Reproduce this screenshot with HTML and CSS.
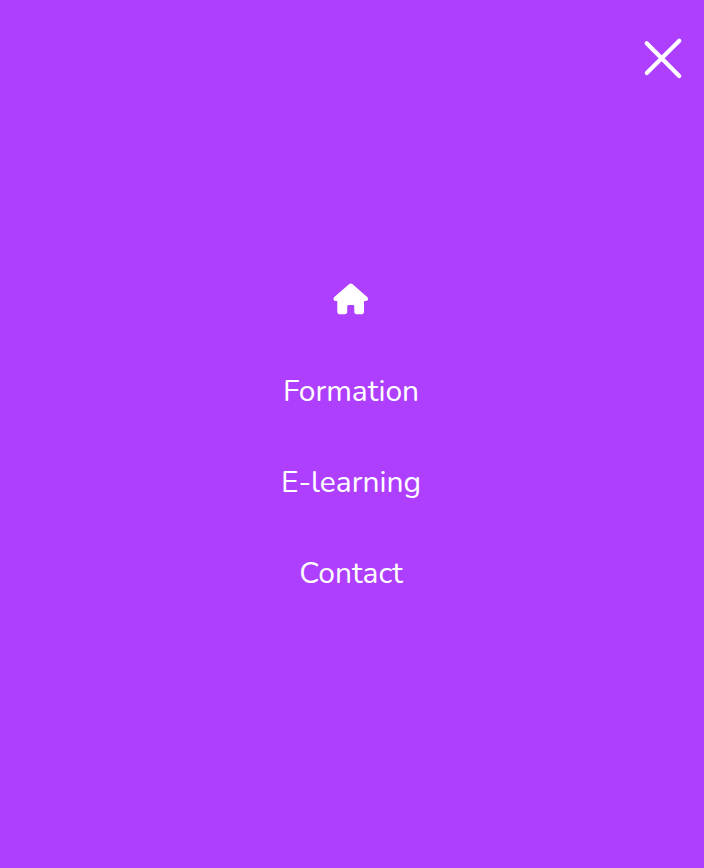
FILE: index.html
```html
<!DOCTYPE html>
<html lang="fr">
<head>
<meta charset="utf-8">
<meta name="viewport" content="width=device-width, initial-scale=1">
<title>Menu</title>
<link rel="stylesheet" href="styles.css">
</head>
<body>
<div class="overlay">
  <button class="close" type="button" aria-label="Fermer le menu">
    <svg viewBox="0 0 40 42" width="40" height="42" aria-hidden="true">
      <path d="M3.7 6.2 36.2 39M3.8 36 36.3 3.8" fill="none" stroke="currentColor" stroke-width="4.2" stroke-linecap="round"/>
    </svg>
  </button>
  <nav class="menu" aria-label="Menu principal">
    <a class="link" href="#" aria-label="Accueil">
      <svg viewBox="0 0 36 36" width="36" height="36" aria-hidden="true">
        <path d="M16.3 1.1Q17.8 0 19.3 1.1L34.2 14Q35.5 15.4 34.9 16.8Q34.3 18 32.7 18H31V28.4Q31 31.2 28.2 31.2H24Q21.3 31.2 21.3 28.5V23.4Q21.3 22 19.9 22H15.6Q14.2 22 14.2 23.4V28.5Q14.2 31.2 11.5 31.2H7.1Q4.3 31.2 4.3 28.4V18H2.8Q1.2 18 .6 16.8Q0 15.4 1.3 14Z" fill="currentColor"/>
      </svg>
    </a>
    <a class="link" href="#">Formation</a>
    <a class="link" href="#">E-learning</a>
    <a class="link" href="#">Contact</a>
  </nav>
</div>
</body>
</html>
```
FILE: styles.css
```css
body {
  margin: 0;
  background: #af3fff;
  color: #fff;
  font-family: Nunito, Lato, sans-serif;
}

.overlay {
  position: relative;
  min-height: 100vh;
  box-sizing: border-box;
  padding: 6px 2px 0 0;
  display: flex;
  align-items: center;
  justify-content: center;
}

.close {
  position: absolute;
  top: 37px;
  right: 21px;
  padding: 0;
  border: 0;
  background: none;
  color: inherit;
  cursor: pointer;
}

.close svg {
  display: block;
}

.menu {
  display: flex;
  flex-direction: column;
  align-items: center;
  gap: 50px;
}

.link {
  display: flex;
  align-items: center;
  height: 41px;
  color: inherit;
  font-size: 30px;
  line-height: 41px;
  text-decoration: none;
}
```
